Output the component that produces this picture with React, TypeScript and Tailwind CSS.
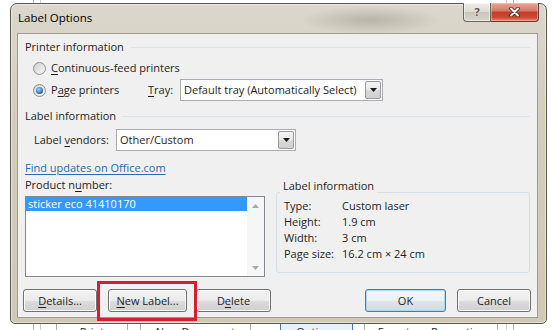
import React from "react";

const U = ({ children }: { children: React.ReactNode }) => (
  <span className="underline underline-offset-[2px]">{children}</span>
);

function Radio({ checked }: { checked?: boolean }) {
  return (
    <span className="flex h-[13px] w-[13px] shrink-0 items-center justify-center rounded-full border border-[#8e8f8f] bg-[linear-gradient(135deg,#cfcfcf,#f9f9f9)]">
      {checked && (
        <span className="h-[7px] w-[7px] rounded-full bg-[radial-gradient(circle_at_40%_35%,#a9d6fa,#2b6db6_65%,#1a4d89)]" />
      )}
    </span>
  );
}

function Combo({ w, text }: { w: string; text: string }) {
  return (
    <div className={`flex h-[22px] border border-[#abadb3] bg-white ${w}`}>
      <span className="flex-1 truncate pl-[3px] leading-[20px]">{text}</span>
      <span className="my-[1px] mr-[1px] flex w-[16px] items-center justify-center rounded-[2px] border border-[#9a9a9a] bg-[linear-gradient(to_bottom,#f4f4f4,#e8e8e8_50%,#dadada_51%,#cfcfcf)]">
        <svg width="7" height="4" viewBox="0 0 7 4">
          <path d="M0 0h7L3.5 4z" fill="#1a1a1a" />
        </svg>
      </span>
    </div>
  );
}

function Btn({ w, children, def }: { w: string; children: React.ReactNode; def?: boolean }) {
  return (
    <div
      className={`flex h-[23px] items-center justify-center rounded-[3px] border leading-[16px] ${w} ${
        def
          ? "border-[#3c7fb1] bg-[linear-gradient(to_bottom,#f4f8fb,#ebf0f4_50%,#dfe5ea_51%,#d4dbe1)] shadow-[inset_0_0_0_1px_#a8daf6]"
          : "border-[#707070] bg-[linear-gradient(to_bottom,#f2f2f2,#ebebeb_50%,#dddddd_51%,#cfcfcf)] shadow-[inset_0_0_0_1px_#fbfbfb]"
      }`}
    >
      {children}
    </div>
  );
}

function Header({ text }: { text: string }) {
  return (
    <div className="flex h-[16px] items-center">
      <span className="leading-[16px] text-[#1e1e1e]">{text}</span>
      <span className="ml-[6px] mt-[1px] h-px flex-1 bg-[#dde3e9]" />
    </div>
  );
}

export default function App() {
  return (
    <div className="relative h-[330px] w-[555px] overflow-hidden bg-white font-['Open_Sans',sans-serif] text-[11px] text-[#1e1e1e]">
      {/* dialog behind */}
      <div className="ml-[33px] h-full w-[481px] border-x border-[#b5b5b5] px-[6px]">
        <div className="flex h-full flex-col border-x border-[#cfcfcf] pt-[318px]">
          <div className="flex h-[30px] items-start text-[11px] text-[#222]">
            <div className="ml-[15px] h-[24px] w-[72px] border border-[#acacac] pt-[6px] text-center leading-[14px]">Print</div>
            <div className="ml-[12px] h-[24px] w-[111px] border border-[#acacac] pt-[6px] text-center leading-[14px]">New Document</div>
            <div className="ml-[29px] h-[24px] w-[73px] border border-[#3c7fb1] bg-[#e5f1fb] pt-[6px] text-center leading-[14px]">Options</div>
            <div className="ml-[11px] h-[24px] w-[134px] border border-[#acacac] pt-[6px] text-center leading-[14px]">E-postage Properties</div>
          </div>
        </div>
      </div>

      {/* Label Options window */}
      <div className="absolute left-[10px] top-[3px] flex h-[321px] w-[537px] flex-col rounded-t-[7px] rounded-b-[5px] border border-[#5a574f] bg-[linear-gradient(to_bottom,#dbd7cc,#d3cdbd_35%,#cfc8b5)] shadow-[inset_0_0_0_1px_rgba(255,255,255,0.45)]">
        <div className="flex h-[29px] shrink-0 bg-[radial-gradient(ellipse_70px_14px_at_360px_16px,rgba(120,118,110,0.35),transparent)]">
          <span className="flex-1 pl-[7px] pt-[6px] text-[11.5px] leading-[16px] text-black">Label Options</span>
          <div className="-mt-px mr-[7px] flex h-[19px]">
            <div className="flex w-[28px] items-center justify-center rounded-bl-[4px] border border-t-0 border-[#6a665d] bg-[linear-gradient(to_bottom,#f0eee8,#dcd9d0_50%,#c9c5b9_51%,#d8d5cc)] shadow-[inset_0_0_0_1px_rgba(255,255,255,0.5)]">
              <span className="text-[11px] font-bold leading-[12px] text-[#55534e] [text-shadow:0_0_2px_#fff]">?</span>
            </div>
            <div className="flex w-[48px] items-center justify-center rounded-br-[4px] border border-l-0 border-t-0 border-[#5e3a33] bg-[linear-gradient(to_bottom,#e8a898,#d57767_45%,#c43d27_50%,#cf4630_80%,#e58a6d)] shadow-[inset_0_0_0_1px_rgba(255,210,200,0.45)]">
              <svg width="11" height="10" viewBox="0 0 11 10">
                <path d="M2 1.5l7 7M9 1.5l-7 7" stroke="#4a1f18" strokeWidth="3.6" strokeLinecap="round" />
                <path d="M2 1.5l7 7M9 1.5l-7 7" stroke="#ffffff" strokeWidth="2" strokeLinecap="round" />
              </svg>
            </div>
          </div>
        </div>

        <div className="ml-[6px] mr-[8px] flex h-[285px] flex-col border border-[#9f9b90] bg-[#f0f0f0] px-[7px]">
          <div className="mt-[5px]">
            <Header text="Printer information" />
          </div>
          <div className="mt-[3px] flex h-[20px] items-center pl-[8px]">
            <Radio />
            <span className="ml-[5px]">
              <U>C</U>ontinuous-feed printers
            </span>
          </div>
          <div className="mt-[1px] flex h-[22px] items-center pl-[8px]">
            <Radio checked />
            <span className="ml-[5px] w-[97px]">
              P<U>a</U>ge printers
            </span>
            <span className="w-[32px]">
              <U>T</U>ray:
            </span>
            <Combo w="w-[203px]" text="Default tray (Automatically Select)" />
          </div>

          <div className="mt-[7px]">
            <Header text="Label information" />
          </div>
          <div className="mt-[5px] flex h-[22px] items-center pl-[9px]">
            <span className="w-[82px]">
              Label <U>v</U>endors:
            </span>
            <Combo w="w-[180px]" text="Other/Custom" />
          </div>

          <div className="mt-[9px] h-[16px] leading-[16px]">
            <span className="text-[#2b68b0] underline underline-offset-[2px]">Find updates on Office.com</span>
          </div>

          <div className="mt-px flex">
            <div className="flex w-[240px] flex-col">
              <span className="h-[16px] leading-[16px]">
                Product n<U>u</U>mber:
              </span>
              <div className="mt-[3px] flex h-[81px] border border-[#828790] bg-white">
                <div className="flex-1">
                  <div className="h-[14px] bg-[#3399ff] pl-[2px] leading-[14px] text-white">sticker eco 41410170</div>
                </div>
                <div className="flex w-[17px] flex-col justify-between bg-[#f6f6f6]">
                  <div className="flex h-[17px] items-center justify-center">
                    <svg width="7" height="4" viewBox="0 0 7 4">
                      <path d="M0 4h7L3.5 0z" fill="#a8a8a8" />
                    </svg>
                  </div>
                  <div className="flex h-[17px] items-center justify-center">
                    <svg width="7" height="4" viewBox="0 0 7 4">
                      <path d="M0 0h7L3.5 4z" fill="#a8a8a8" />
                    </svg>
                  </div>
                </div>
              </div>
            </div>

            <fieldset className="ml-[11px] mt-px h-[95px] w-[254px] rounded-[3px] border border-[#d5dfe5]">
              <legend className="ml-[3px] px-[3px] pb-[12px] leading-[16px]">Label information</legend>
              <div className="-mt-[8px] grid grid-cols-[58px_1fr] pl-[7px] leading-[16px]">
                <span>Type:</span>
                <span>Custom laser</span>
                <span>Height:</span>
                <span>1.9 cm</span>
                <span>Width:</span>
                <span>3 cm</span>
                <span>Page size:</span>
                <span>16.2 cm × 24 cm</span>
              </div>
            </fieldset>
          </div>

          <div className="-ml-[2px] -mr-px mt-[12px] flex">
            <Btn w="w-[74px]">
              <span>
                <U>D</U>etails...
              </span>
            </Btn>
            <div className="ml-[11px]">
              <Btn w="w-[79px]">
                <span>
                  <U>N</U>ew Label...
                </span>
              </Btn>
            </div>
            <div className="ml-[9px]">
              <Btn w="w-[75px]">
                <span>
                  D<U>e</U>lete
                </span>
              </Btn>
            </div>
            <div className="flex-1" />
            <Btn w="w-[81px]" def>
              OK
            </Btn>
            <div className="ml-[11px]">
              <Btn w="w-[74px]">Cancel</Btn>
            </div>
          </div>
        </div>
      </div>

      {/* red highlight annotation */}
      <div className="absolute left-[97px] top-[281px] h-[40px] w-[100px] border-[3px] border-[#d3202c]" />
    </div>
  );
}
